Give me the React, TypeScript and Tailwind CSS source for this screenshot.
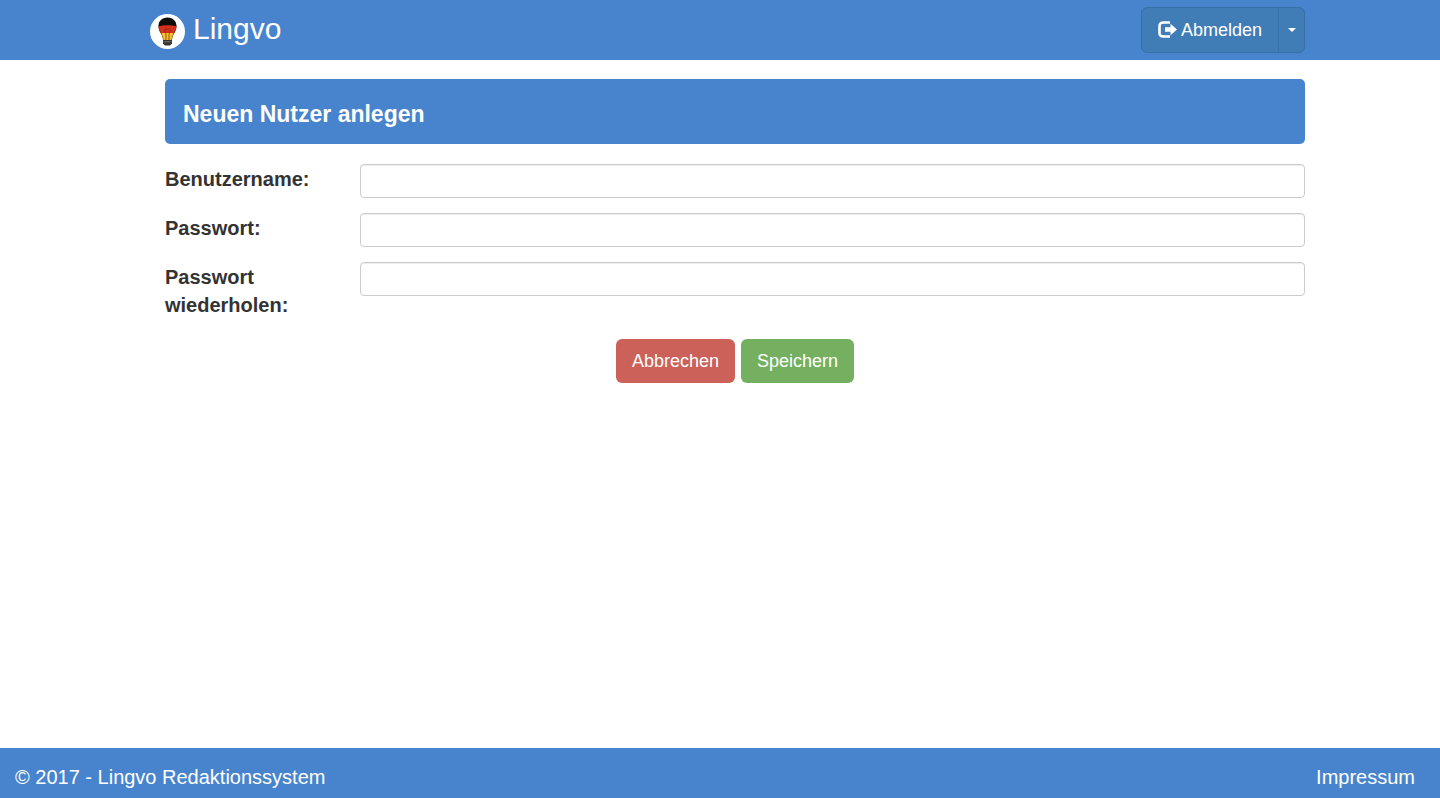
import React from "react";

function LogoIcon() {
  return (
    <svg viewBox="0 0 35 35" className="size-[35px]" aria-hidden="true">
      <defs>
        <clipPath id="bulb">
          <path d="M17.500 3.500C12.300 3.500 8.500 7 8.500 12c0 3.500 1.300 5.500 2.700 8 1 2 1.600 3.500 1.800 6h9c.2-2.500.8-4 1.800-6 1.400-2.500 2.700-4.500 2.700-8 0-5-3.800-8.500-9-8.500z" />
        </clipPath>
      </defs>
      <circle cx="17.500" cy="17.500" r="17.500" fill="#fff" />
      <g clipPath="url(#bulb)">
        <rect x="8" y="3" width="20" height="10" fill="#120c0b" />
        <path d="M8 12.500Q17.500 10 28 12.500V20H8z" fill="#d8301c" />
        <rect x="8" y="19" width="20" height="8" fill="#f3c22e" />
        <path d="M14.500 15.500l1.500 5v6M20.500 15.500l-1.500 5v6M14.500 15.500l1.500-1 1.500 1 1.500-1 1.500 1" fill="none" stroke="#7a2413" strokeWidth="0.700" />
        <path d="M8.500 12c0 3.500 1.300 5.500 2.700 8 1 2 1.600 3.500 1.800 6M26.500 12c0 3.500-1.300 5.500-2.700 8-1 2-1.600 3.500-1.800 6" fill="none" stroke="#7c3b1c" strokeWidth="1.200" />
      </g>
      <path d="M13 26h9v3.500L20 31.500h-5l-2-2z" fill="#37332d" />
      <path d="M13.500 27.800h8" stroke="#8a8478" strokeWidth="0.800" />
    </svg>
  );
}

function LogoutIcon() {
  return (
    <svg viewBox="0 0 19 18" className="h-[18px] w-[19px]" aria-hidden="true">
      <path d="M12 1.500H5.500Q1.500 1.500 1.500 5v7Q1.500 15.500 5.500 15.500H12" fill="none" stroke="#fff" strokeWidth="2.600" />
      <path d="M12.500 2.700L19 8.500L12.500 14.300V10.800H7V6.200H12.500z" fill="#fff" />
    </svg>
  );
}

type FieldProps = { id: string; label: string; type: string };

function Field({ id, label, type }: FieldProps) {
  return (
    <div className="flex items-start">
      <label htmlFor={id} className="w-[195px] shrink-0 pt-px pr-[30px] text-xl leading-7 font-bold">
        {label}
      </label>
      <input
        id={id}
        name={id}
        type={type}
        className="h-[34px] min-w-0 flex-1 rounded border border-[#ccc] bg-white px-3 text-sm text-[#555] shadow-[inset_0_1px_1px_rgba(0,0,0,0.075)] outline-none focus:border-[#66afe9]"
      />
    </div>
  );
}

export default function App() {
  return (
    <div className="flex min-h-screen flex-col bg-white font-['Helvetica_Neue','Liberation_Sans',sans-serif] text-[#333]">
      <header className="h-[60px] bg-[#4884cd] text-white">
        <div className="mx-auto flex h-full max-w-[1170px] items-center justify-between pl-[15px]">
          <a href="#" className="flex items-center gap-2 pt-[2px]">
            <LogoIcon />
            <span className="pb-1 text-[30px] leading-9">Lingvo</span>
          </a>
          <div className="flex h-[46px] rounded-md border border-[#3870a8] bg-[#407cb5]">
            <button type="button" className="flex items-center gap-1 px-4 text-lg">
              <LogoutIcon />
              Abmelden
            </button>
            <button
              type="button"
              aria-label="Menü öffnen"
              className="flex w-[26px] items-center justify-center border-l border-[#3870a8]"
            >
              <svg viewBox="0 0 8 4" className="h-1 w-2" aria-hidden="true">
                <path d="M0 0h8L4 4z" fill="#fff" />
              </svg>
            </button>
          </div>
        </div>
      </header>

      <main className="mx-auto w-full max-w-[1170px] flex-1 pt-[19px] pl-[30px]">
        <h1 className="rounded-[5px] bg-[#4884cd] px-[18px] pt-[21px] pb-4 text-[23px] leading-7 font-bold text-white">
          Neuen Nutzer anlegen
        </h1>
        <form className="pt-5" onSubmit={(e) => e.preventDefault()}>
          <div className="flex flex-col gap-[15px]">
            <Field id="username" label="Benutzername:" type="text" />
            <Field id="password" label="Passwort:" type="password" />
            <Field id="password-repeat" label="Passwort wiederholen:" type="password" />
          </div>
          <div className="flex justify-center gap-[6px] pt-5">
            <button type="button" className="h-11 rounded-md bg-[#cb6158] px-4 text-lg text-white">
              Abbrechen
            </button>
            <button type="submit" className="h-11 rounded-md bg-[#74b060] px-4 text-lg text-white">
              Speichern
            </button>
          </div>
        </form>
      </main>

      <footer className="flex h-[50px] items-center justify-between bg-[#4884cd] pt-2 pr-[25px] pl-[15px] text-xl text-white">
        <p>© 2017 - Lingvo Redaktionssystem</p>
        <a href="#">Impressum</a>
      </footer>
    </div>
  );
}
